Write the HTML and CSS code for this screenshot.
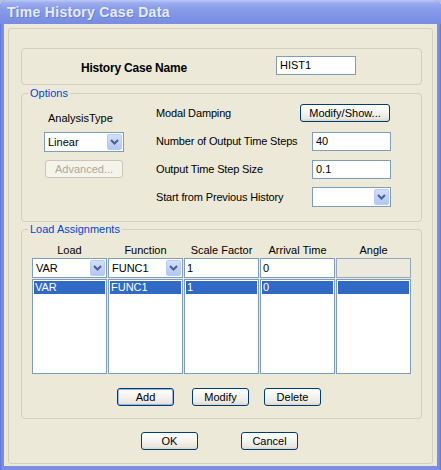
FILE: index.html
```html
<!DOCTYPE html>
<html>
<head>
<meta charset="utf-8">
<title>Time History Case Data</title>
<link rel="stylesheet" href="styles.css">
</head>
<body>
<div class="window">
  <div class="titlebar"><span class="title">Time History Case Data</span></div>
  <div class="client">
    <div class="frame">
      <div class="namebox">
        <span class="namelabel">History Case Name</span>
        <div class="textbox name">HIST1</div>
      </div>

      <fieldset class="group options">
        <legend>Options</legend>
        <div class="opt-body">
          <div class="opt-left">
            <div class="lbl">AnalysisType</div>
            <div class="combo analysis">
              <span class="val">Linear</span>
              <span class="arrow"><svg width="9" height="6" viewBox="0 0 9 6"><path d="M1 1 L4.5 4.5 L8 1" fill="none" stroke="#4d6185" stroke-width="2"/></svg></span>
            </div>
            <button class="btn disabled advanced">Advanced...</button>
          </div>
          <div class="opt-right">
            <span class="olbl">Modal Damping</span>
            <button class="btn modshow">Modify/Show...</button>
            <span class="olbl">Number of Output Time Steps</span>
            <div class="textbox small">40</div>
            <span class="olbl">Output Time Step Size</span>
            <div class="textbox small">0.1</div>
            <span class="olbl">Start from Previous History</span>
            <div class="combo small">
              <span class="val"></span>
              <span class="arrow"><svg width="9" height="6" viewBox="0 0 9 6"><path d="M1 1 L4.5 4.5 L8 1" fill="none" stroke="#4d6185" stroke-width="2"/></svg></span>
            </div>
          </div>
        </div>
      </fieldset>

      <fieldset class="group loads">
        <legend>Load Assignments</legend>
        <div class="load-body">
          <div class="table">
            <div class="hdr">Load</div>
            <div class="hdr">Function</div>
            <div class="hdr">Scale Factor</div>
            <div class="hdr">Arrival Time</div>
            <div class="hdr">Angle</div>

            <div class="combo cell">
              <span class="val">VAR</span>
              <span class="arrow"><svg width="9" height="6" viewBox="0 0 9 6"><path d="M1 1 L4.5 4.5 L8 1" fill="none" stroke="#4d6185" stroke-width="2"/></svg></span>
            </div>
            <div class="combo cell">
              <span class="val">FUNC1</span>
              <span class="arrow"><svg width="9" height="6" viewBox="0 0 9 6"><path d="M1 1 L4.5 4.5 L8 1" fill="none" stroke="#4d6185" stroke-width="2"/></svg></span>
            </div>
            <div class="textbox cell">1</div>
            <div class="textbox cell">0</div>
            <div class="textbox cell off"></div>

            <div class="list"><div class="sel">VAR</div></div>
            <div class="list"><div class="sel">FUNC1</div></div>
            <div class="list"><div class="sel">1</div></div>
            <div class="list"><div class="sel">0</div></div>
            <div class="list"><div class="sel"></div></div>
          </div>
          <div class="load-buttons">
            <button class="btn default add">Add</button>
            <button class="btn modify">Modify</button>
            <button class="btn">Delete</button>
          </div>
        </div>
      </fieldset>

      <div class="footer">
        <button class="btn ok">OK</button>
        <button class="btn">Cancel</button>
      </div>
    </div>
  </div>
</div>
</body>
</html>
```

FILE: styles.css
```css
* {
  box-sizing: border-box;
}

html,
body {
  margin: 0;
  padding: 0;
}

body {
  width: 441px;
  height: 470px;
  overflow: hidden;
  background: #b4c0ec;
  font-family: "Liberation Sans", Arial, sans-serif;
  font-size: 11px;
  color: #000;
}

.window {
  width: 441px;
  height: 470px;
  display: flex;
  flex-direction: column;
  background: linear-gradient(90deg, #5f74d6 0, #7a8fe3 2px, #7a8fe3 439px, #5f74d6 441px);
  border-radius: 7px 7px 0 0;
}

.titlebar {
  height: 24px;
  flex: none;
  display: flex;
  align-items: center;
  padding-left: 7px;
  border-radius: 7px 7px 0 0;
  background: linear-gradient(180deg, #bccaf6 0%, #9cadef 12%, #899de9 35%, #7e93e5 70%, #788de2 100%);
}

.title {
  font-weight: bold;
  font-size: 14px;
  letter-spacing: 0.3px;
  color: #e6ecfb;
  text-shadow: 1px 1px 0 rgba(50, 70, 160, 0.3);
}

.client {
  flex: 1;
  display: flex;
  margin: 0 4px 4px 4px;
  padding: 4px 4px 2px 4px;
  background: #ece9d8;
}

.frame {
  flex: 1;
  display: flex;
  flex-direction: column;
  align-items: flex-start;
  padding-left: 12px;
  border: 1px solid #d0d0bf;
  border-radius: 3px;
}

.namebox {
  margin-top: 19px;
  width: 401px;
  height: 37px;
  display: flex;
  align-items: center;
  border: 1px solid #d0d0bf;
  border-radius: 4px;
  padding-left: 59px;
}

.namelabel {
  font-weight: bold;
  font-size: 12px;
  letter-spacing: -0.2px;
  margin-right: auto;
  padding-top: 2px;
}

.textbox {
  background: #fff;
  border: 1px solid #7f9db9;
  display: flex;
  align-items: center;
  padding-left: 3px;
  white-space: nowrap;
}

.textbox.name {
  width: 80px;
  height: 19px;
  margin-right: 65px;
  margin-bottom: 3px;
}

.group {
  margin: 0;
  width: 401px;
  min-width: 0;
  border: 1px solid #d0d0bf;
  border-radius: 4px;
  padding: 0;
}

.group legend {
  color: #0046d5;
  font-size: 11px;
  line-height: 11px;
  padding: 0 2px;
  margin-left: 6px;
}

.options {
  margin-top: 3px;
  padding-bottom: 10px;
}

.opt-body {
  display: flex;
  padding-left: 22px;
  gap: 32px;
}

.opt-left {
  width: 80px;
  display: flex;
  flex-direction: column;
  align-items: flex-start;
}

.lbl {
  margin-top: 12px;
  line-height: 14px;
  padding-left: 4px;
}

.combo {
  background: #fff;
  border: 1px solid #7f9db9;
  display: flex;
  align-items: stretch;
  padding: 1px;
  white-space: nowrap;
}

.combo .val {
  flex: 1;
  display: flex;
  align-items: center;
  padding-left: 2px;
}

.combo .arrow {
  width: 15px;
  display: flex;
  align-items: center;
  justify-content: center;
  background: linear-gradient(180deg, #d2defc 0%, #c1d2fa 50%, #b3c7f5 100%);
  border: 1px solid #b9cbf5;
  border-radius: 2px;
}

.combo.analysis {
  margin-top: 7px;
  width: 80px;
  height: 20px;
}

.btn {
  font-family: "Liberation Sans", Arial, sans-serif;
  font-size: 11px;
  color: #000;
  height: 18px;
  padding: 0;
  border: 1px solid #003c74;
  border-radius: 3px;
  background: linear-gradient(180deg, #ffffff 0%, #f5f4ef 45%, #e9e7df 85%, #d8d4c8 100%);
}

.btn.disabled {
  color: #aca899;
  border-color: #c9c7ba;
  background: #f5f4ea;
}

.btn.advanced {
  margin-top: 8px;
  margin-left: 1px;
  width: 78px;
}

.btn.default {
  box-shadow: inset 0 0 0 1px #9bb4e6;
}

.opt-right {
  display: grid;
  grid-template-columns: 145px 90px;
  grid-auto-rows: 28px;
  align-items: center;
}

.olbl {
  white-space: nowrap;
  letter-spacing: -0.15px;
}

.opt-right > .btn,
.opt-right > .textbox,
.opt-right > .combo {
  justify-self: end;
}

.btn.modshow {
  width: 90px;
  margin-right: 1px;
  margin-top: -1px;
}

.textbox.small {
  width: 79px;
  height: 19px;
}

.combo.small {
  width: 79px;
  height: 20px;
}

.loads {
  margin-top: 2px;
  padding-bottom: 12px;
}

.load-body {
  padding-left: 10px;
}

.table {
  display: grid;
  grid-template-columns: repeat(5, 75px);
  column-gap: 1px;
}

.hdr {
  text-align: center;
  padding-top: 9px;
  height: 23px;
  line-height: 13px;
  white-space: nowrap;
}

.cell {
  height: 20px;
}

.textbox.cell {
  padding-left: 2px;
}

.textbox.off {
  background: #ece9df;
  border-color: #9aa6b6;
}

.list {
  margin-top: 1px;
  height: 95px;
  background: #fff;
  border: 1px solid #7f9db9;
  padding: 1px;
}

.sel {
  height: 13px;
  line-height: 13px;
  padding-left: 1px;
  background: #316ac5;
  color: #fff;
}

.load-buttons {
  display: flex;
  margin-top: 14px;
  padding-left: 85px;
}

.load-buttons .btn {
  width: 57px;
}

.btn.add {
  margin-right: 18px;
}

.btn.modify {
  margin-right: 15px;
}

.footer {
  display: flex;
  margin-top: 13px;
  padding-left: 120px;
}

.footer .btn {
  width: 57px;
}

.btn.ok {
  margin-right: 43px;
}
```
